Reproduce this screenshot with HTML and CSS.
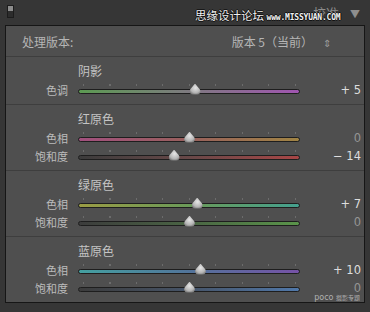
FILE: index.html
```html
<!DOCTYPE html>
<html lang="zh-CN">
<head>
  <meta charset="UTF-8">
  <title>校准</title>
  <link rel="stylesheet" href="styles.css">
</head>
<body>

  <div class="topbar">
    <div class="panel-icon"></div>
    <div class="title">校准 <span class="caret">▼</span></div>
    <div class="watermark">思缘设计论坛 <span class="wm-url">www.MISSYUAN.COM</span></div>
  </div>

  <div class="panel">
    <div class="version-row">
      <span>处理版本:</span>
      <span class="version-value">版本 5（当前）<span class="updown">⇕</span></span>
    </div>

    <div class="section">
      <div class="section-title">阴影</div>
      <div class="slider-row">
        <span class="label">色调</span>
        <div class="track shadow-tint"><span class="thumb" style="left: 52.5%"></span></div>
        <span class="value">+ 5</span>
      </div>
    </div>

    <div class="section">
      <div class="section-title">红原色</div>
      <div class="slider-row">
        <span class="label">色相</span>
        <div class="track red-hue"><span class="thumb" style="left: 50%"></span></div>
        <span class="value zero">0</span>
      </div>
      <div class="slider-row">
        <span class="label">饱和度</span>
        <div class="track red-sat"><span class="thumb" style="left: 43%"></span></div>
        <span class="value">− 14</span>
      </div>
    </div>

    <div class="section">
      <div class="section-title">绿原色</div>
      <div class="slider-row">
        <span class="label">色相</span>
        <div class="track green-hue"><span class="thumb" style="left: 53.5%"></span></div>
        <span class="value">+ 7</span>
      </div>
      <div class="slider-row">
        <span class="label">饱和度</span>
        <div class="track green-sat"><span class="thumb" style="left: 50%"></span></div>
        <span class="value zero">0</span>
      </div>
    </div>

    <div class="section">
      <div class="section-title">蓝原色</div>
      <div class="slider-row">
        <span class="label">色相</span>
        <div class="track blue-hue"><span class="thumb" style="left: 55%"></span></div>
        <span class="value">+ 10</span>
      </div>
      <div class="slider-row">
        <span class="label">饱和度</span>
        <div class="track blue-sat"><span class="thumb" style="left: 50%"></span></div>
        <span class="value zero">0</span>
      </div>
      <div class="poco">poco <span>摄影专题</span></div>
    </div>
  </div>

</body>
</html>
```

FILE: styles.css
```css
body {
  margin: 0;
  width: 370px;
  height: 312px;
  background: #363636;
  font-family: "Noto Sans CJK SC", "Noto Sans", sans-serif;
  color: #bdbdbd;
  overflow: hidden;
}
.topbar {
  position: relative;
  height: 25px;
  display: flex;
  align-items: center;
  justify-content: space-between;
  padding: 0 10px 0 7px;
}
.panel-icon {
  width: 5px;
  height: 11px;
  margin-top: -3px;
  border: 1px solid #1c1c1c;
  background: linear-gradient(#8c8c8c 0 50%, #2c2c2c 50% 100%);
}
.title {
  font-size: 13px;
  color: #8e8e8e;
  margin-top: -1px;
}
.caret {
  font-size: 10px;
  margin-left: 8px;
}
.watermark {
  position: absolute;
  left: 195px;
  top: 8px;
  font-size: 11.5px;
  line-height: 15px;
  color: #f0f0f0;
  text-shadow: 1px 0 0 #111, -1px 0 0 #111, 0 1px 0 #111, 0 -1px 0 #111;
  white-space: nowrap;
}
.wm-url {
  font-family: "DejaVu Sans Mono", monospace;
  font-size: 8px;
  font-weight: bold;
  letter-spacing: -0.2px;
}
.panel {
  margin-left: 5px;
  width: 358px;
  border: 1px solid #161616;
  background: #4f4f4f;
}
.version-row {
  height: 30px;
  display: flex;
  align-items: center;
  justify-content: space-between;
  padding: 0 33px 0 16px;
  font-size: 12px;
  color: #b5b5b5;
}
.updown {
  font-size: 10px;
  margin-left: 10px;
  color: #9a9a9a;
}
.section {
  position: relative;
  border-top: 1px solid #3e3e3e;
  padding: 4px 0 5px;
}
.section-title {
  height: 20px;
  line-height: 20px;
  padding-left: 72px;
  font-size: 12px;
  color: #c4c4c4;
}
.slider-row {
  height: 18px;
  display: grid;
  grid-template-columns: 62px 222px 51px;
  column-gap: 10px;
  align-items: center;
  font-size: 11px;
}
.label {
  text-align: right;
  color: #bcbcbc;
}
.value {
  text-align: right;
  font-family: "DejaVu Sans", sans-serif;
  font-size: 11.5px;
  color: #dedede;
}
.value.zero {
  color: #959595;
}
.track {
  position: relative;
  height: 3px;
  border: 1px solid #1e1e1e;
  border-radius: 3px;
  margin-top: 2px;
}
.track::before {
  content: "";
  position: absolute;
  left: 4px;
  width: 213px;
  top: -6px;
  height: 2px;
  background: repeating-linear-gradient(to right, #6c6c6c 0 1px, transparent 1px 26.5px);
}
.thumb {
  position: absolute;
  top: -6px;
  width: 11px;
  height: 11px;
  margin-left: -5px;
  background: radial-gradient(circle at 50% 35%, #e6e6e6, #b4b4b4 55%, #5a5a5a 90%);
  clip-path: polygon(50% 0, 70% 25%, 95% 55%, 100% 75%, 90% 95%, 75% 100%, 25% 100%, 10% 95%, 0 75%, 5% 55%, 30% 25%);
}
.shadow-tint { background: linear-gradient(to right, #5c9a52, #7e7a80 50%, #a055b0); }
.red-hue { background: linear-gradient(to right, #a2507e, #98605c 50%, #a08444); }
.red-sat { background: linear-gradient(to right, #3c3c3c, #684848 50%, #a84646); }
.green-hue { background: linear-gradient(to right, #9a9c44, #6a9a58 50%, #44a08e); }
.green-sat { background: linear-gradient(to right, #3c3c3c, #4a6444 50%, #5a944a); }
.blue-hue { background: linear-gradient(to right, #44a0a0, #52749a 50%, #7652a6); }
.blue-sat { background: linear-gradient(to right, #3c3c3c, #465468 50%, #5078aa); }
.poco {
  position: absolute;
  right: 4px;
  bottom: 0;
  font-family: "DejaVu Sans", sans-serif;
  font-size: 8px;
  color: #c8c8c8;
  opacity: 0.8;
}
.poco span {
  font-family: "Noto Sans CJK SC", sans-serif;
  font-size: 6px;
}
```
